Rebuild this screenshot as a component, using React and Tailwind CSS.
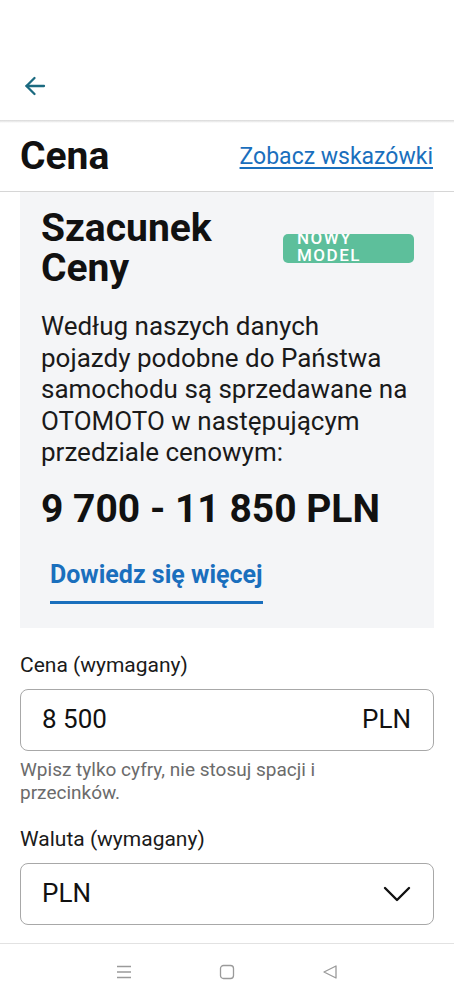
import React from 'react';

const BackArrow = () => (
  <svg width="24" height="24" viewBox="0 0 24 24" fill="none" stroke="#1b6a80" strokeWidth="2.3" strokeLinecap="round" strokeLinejoin="round">
    <path d="M21 12H3.5" />
    <path d="M11.5 4l-8 8 8 8" />
  </svg>
);

const Chevron = () => (
  <svg width="28" height="16" viewBox="0 0 28 16" fill="none" stroke="#111" strokeWidth="2.4" strokeLinecap="round" strokeLinejoin="round">
    <path d="M2 2l12 12L26 2" />
  </svg>
);

const NavBar = () => (
  <div className="h-[56px] border-t border-[#e2e2e2] bg-white flex items-center justify-center gap-[87px] shrink-0">
    <svg width="16" height="16" viewBox="0 0 16 16" fill="none" stroke="#9a9a9a" strokeWidth="1.3">
      <path d="M1 2.5h14M1 8h14M1 13.5h14" />
    </svg>
    <svg width="16" height="16" viewBox="0 0 16 16" fill="none" stroke="#9a9a9a" strokeWidth="1.3">
      <rect x="1.5" y="1.5" width="13" height="13" rx="3" />
    </svg>
    <svg width="16" height="16" viewBox="0 0 16 16" fill="none" stroke="#9a9a9a" strokeWidth="1.3" strokeLinejoin="round">
      <path d="M14 2L2 8l12 6z" />
    </svg>
  </div>
);

export default function App() {
  return (
    <div className="w-[454px] h-[999px] bg-white flex flex-col overflow-hidden text-[#111]" style={{ fontFamily: 'Roboto, "Noto Sans", sans-serif' }}>
      <div className="h-[120px] flex items-end pb-[22px] pl-[23px] shrink-0">
        <BackArrow />
      </div>
      <div className="h-[3px] bg-gradient-to-b from-[#d8d8d8] to-white shrink-0" />

      <div className="flex-1 flex flex-col overflow-hidden">
        <div className="flex items-center justify-between pl-[20px] pr-[21px] h-[69px] border-b border-[#d6d6d6] shrink-0">
          <h1 className="text-[39px] font-bold leading-[44px] -mt-[2px]">Cena</h1>
          <a className="text-[23px] leading-[28px] text-[#1a6fbd] underline underline-offset-[3px] decoration-[1.5px]">Zobacz wskazówki</a>
        </div>

        <div className="mx-[20px] bg-[#f4f5f7] pl-[21px] pr-[20px] pt-[16px] pb-[24px] shrink-0">
          <div className="flex items-start justify-between">
            <h2 className="text-[39px] font-bold leading-[40px]">Szacunek<br />Ceny</h2>
            <div className="mt-[26px] w-[131px] h-[29px] bg-[#5dbf9b] rounded-[5px] overflow-hidden pl-[14px]">
              <div className="text-white text-[17px] font-medium leading-[17px] tracking-[1.5px] -mt-[4px]">NOWY<br />MODEL</div>
            </div>
          </div>
          <p className="mt-[23px] text-[26px] leading-[31.5px] text-[#1a1a1a]">
            Według naszych danych<br />pojazdy podobne do Państwa<br />samochodu są sprzedawane na<br />OTOMOTO w następującym<br />przedziale cenowym:
          </p>
          <div className="mt-[18px] text-[39px] font-bold leading-[44px]">9 700 - 11 850 PLN</div>
          <div className="mt-[29px] ml-[9px] inline-block">
            <div className="text-[25px] font-bold text-[#1a6fbd] leading-[30px]">Dowiedz się więcej</div>
            <div className="mt-[11px] h-[3px] bg-[#1a6fbd]" />
          </div>
        </div>

        <div className="px-[20px] pt-[24px]">
          <label className="block text-[21px] leading-[26px] text-[#1a1a1a]">Cena (wymagany)</label>
          <div className="mt-[11px] h-[62px] border border-[#a8a8a8] rounded-[8px] flex items-center justify-between pl-[21px] pr-[22px]">
            <span className="text-[26px]">8 500</span>
            <span className="text-[26px]">PLN</span>
          </div>
          <p className="mt-[7px] text-[19px] leading-[23px] text-[#6b6b6b]">Wpisz tylko cyfry, nie stosuj spacji i<br />przecinków.</p>
          <label className="block mt-[22px] text-[21px] leading-[26px] text-[#1a1a1a]">Waluta (wymagany)</label>
          <div className="mt-[11px] h-[62px] border border-[#a8a8a8] rounded-[8px] flex items-center justify-between pl-[21px] pr-[22px]">
            <span className="text-[26px]">PLN</span>
            <Chevron />
          </div>
        </div>
      </div>

      <NavBar />
    </div>
  );
}
